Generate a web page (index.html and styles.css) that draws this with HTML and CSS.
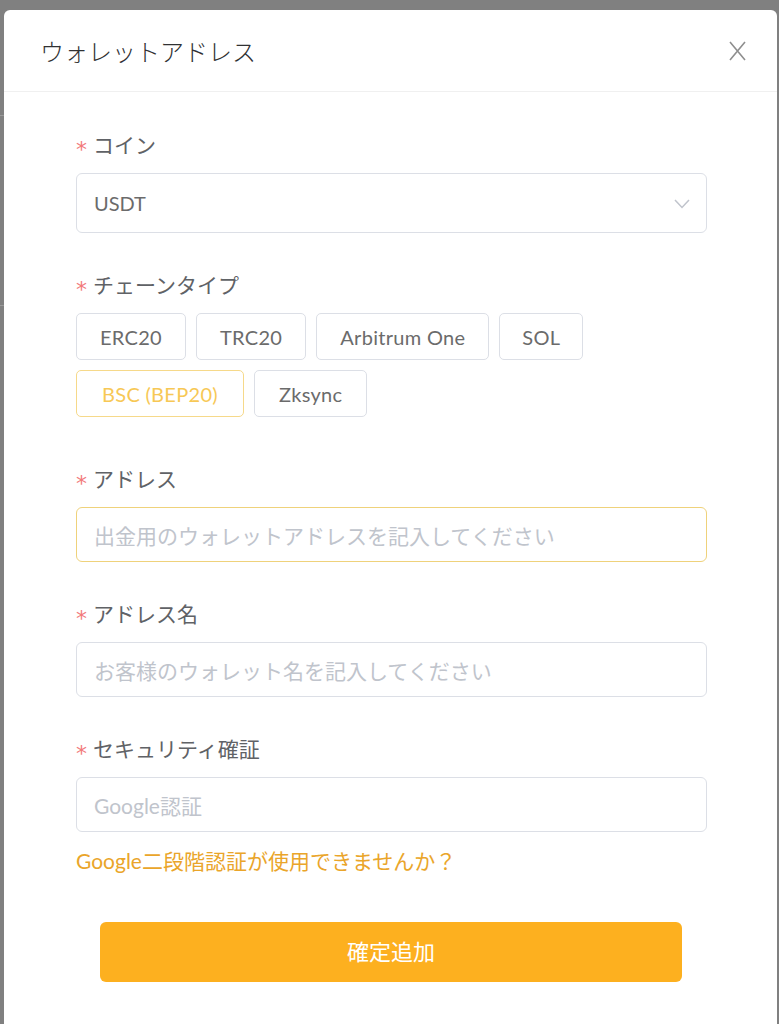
FILE: index.html
```html
<!DOCTYPE html>
<html lang="ja">
<head>
<meta charset="utf-8">
<title>ウォレットアドレス</title>
<link rel="stylesheet" href="styles.css">
</head>
<body>
<div class="backdrop">
  <div class="bg-lines">
    <div class="bg-line l1"></div>
    <div class="bg-line l2"></div>
  </div>
  <div class="modal">
    <div class="modal-header">
      <h2 class="modal-title">ウォレットアドレス</h2>
      <button class="close" aria-label="close">
        <svg width="17" height="20" viewBox="0 0 17 20"><path d="M1 1 L16 19 M16 1 L1 19" stroke="#8e8e8e" stroke-width="1.6" fill="none"/></svg>
      </button>
    </div>
    <div class="modal-body">
      <div class="form-item">
        <div class="label"><span class="req">*</span>コイン</div>
        <div class="select">
          <span class="select-value">USDT</span>
          <svg class="chevron" width="16" height="10" viewBox="0 0 16 10"><path d="M1 1 L8 8.5 L15 1" stroke="#c0c4cc" stroke-width="1.5" fill="none"/></svg>
        </div>
      </div>
      <div class="form-item">
        <div class="label"><span class="req">*</span>チェーンタイプ</div>
        <div class="chains">
          <span class="chain">ERC20</span>
          <span class="chain">TRC20</span>
          <span class="chain">Arbitrum One</span>
          <span class="chain narrow">SOL</span>
          <span class="chain active">BSC (BEP20)</span>
          <span class="chain wide">Zksync</span>
        </div>
      </div>
      <div class="form-item">
        <div class="label"><span class="req">*</span>アドレス</div>
        <div class="input focused"><span class="placeholder">出金用のウォレットアドレスを記入してください</span></div>
      </div>
      <div class="form-item">
        <div class="label"><span class="req">*</span>アドレス名</div>
        <div class="input"><span class="placeholder">お客様のウォレット名を記入してください</span></div>
      </div>
      <div class="form-item last">
        <div class="label"><span class="req">*</span>セキュリティ確証</div>
        <div class="input"><span class="placeholder">Google認証</span></div>
        <a class="link">Google二段階認証が使用できませんか？</a>
      </div>
      <button class="submit">確定追加</button>
    </div>
  </div>
</div>
</body>
</html>
```
FILE: styles.css
```css
* { box-sizing: border-box; }
html, body { margin: 0; padding: 0; height: 100%; }
body {
  background: #808080;
  font-family: Lato, "Noto Sans CJK JP", sans-serif;
  overflow: hidden;
}
.backdrop {
  position: relative;
  height: 1024px;
  padding: 10px 2px 0 4px;
}
.bg-lines { position: absolute; inset: 0; }
.bg-line { position: absolute; left: 0; width: 4px; height: 1px; background: #9a9a9a; }
.l1 { top: 115px; }
.l2 { top: 305px; }
.modal {
  position: relative;
  background: #fff;
  border-radius: 6px 6px 0 0;
  height: 1014px;
  width: 773px;
}
.modal-header {
  height: 82px;
  border-bottom: 1px solid #f0f0f0;
  display: flex;
  align-items: center;
  justify-content: space-between;
  padding: 0 31px 0 36px;
}
.modal-title {
  margin: 0;
  font-size: 24px;
  font-weight: 300;
  color: #303133;
}
.close {
  border: 0;
  background: none;
  padding: 0;
  display: flex;
  cursor: pointer;
}
.modal-body {
  padding: 38px 70px 0 72px;
}
.form-item { margin-bottom: 37px; }
.form-item.last { margin-bottom: 46px; }
.label {
  display: flex;
  align-items: center;
  height: 30px;
  font-size: 21px;
  line-height: 30px;
  color: #606266;
  margin-bottom: 13px;
}
.req {
  width: 17px;
  color: #f27a7a;
  font-family: "DejaVu Sans", sans-serif;
  font-size: 22px;
  line-height: 30px;
  transform: translateY(5px);
}
.select {
  height: 60px;
  border: 1px solid #dcdfe6;
  border-radius: 6px;
  display: flex;
  align-items: center;
  justify-content: space-between;
  padding: 0 16px 0 17px;
}
.select-value { font-size: 20px; color: #6b6b6b; }
.chevron { margin-top: 2px; }
.chains {
  display: flex;
  flex-wrap: wrap;
  gap: 10px;
  padding-bottom: 10px;
}
.chain {
  height: 47px;
  display: flex;
  align-items: center;
  padding: 0 23px;
  border: 1px solid #dcdfe6;
  border-radius: 5px;
  font-size: 20px;
  letter-spacing: 0.3px;
  color: #6b6b6b;
  background: #fff;
}
.chain.narrow { padding: 0 22px; }
.chain.active {
  border-color: #f6d98a;
  color: #f7c856;
  padding: 0 25px;
}
.chain.wide { padding: 0 24px; }
.input {
  height: 55px;
  border: 1px solid #dcdfe6;
  border-radius: 6px;
  display: flex;
  align-items: center;
  padding: 0 17px;
}
.input.focused { border-color: #efd27b; }
.placeholder { font-size: 21px; color: #c0c4cc; }
.link {
  display: block;
  margin-top: 14px;
  font-size: 21px;
  line-height: 30px;
  color: #eaa52a;
}
.submit {
  display: block;
  width: 582px;
  height: 60px;
  margin: 0 0 0 24px;
  padding: 0 0 5px;
  border: 0;
  border-radius: 6px;
  background: #fdb01f;
  color: #fff;
  font-family: Lato, "Noto Sans CJK JP", sans-serif;
  font-size: 22px;
}
```
